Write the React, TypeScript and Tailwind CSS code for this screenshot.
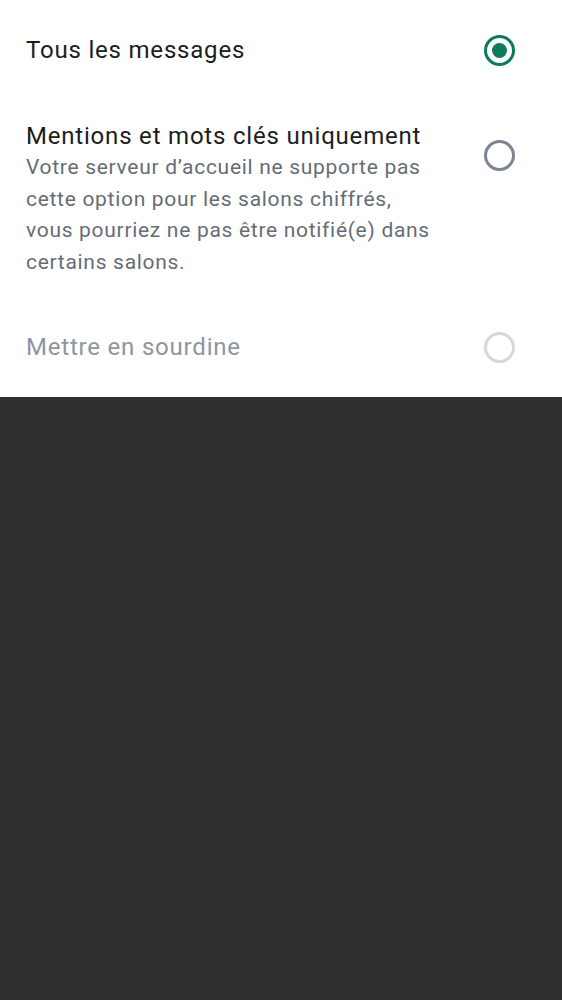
import React from 'react';

type Option = {
  label: string;
  description?: string;
  selected?: boolean;
  disabled?: boolean;
};

const options: Option[] = [
  { label: 'Tous les messages', selected: true },
  {
    label: 'Mentions et mots clés uniquement',
    description:
      'Votre serveur d’accueil ne supporte pas cette option pour les salons chiffrés, vous pourriez ne pas être notifié(e) dans certains salons.',
  },
  { label: 'Mettre en sourdine', disabled: true },
];

const Radio: React.FC<{ selected?: boolean; disabled?: boolean }> = ({ selected, disabled }) => {
  if (selected) {
    return (
      <div className="w-[31px] h-[31px] rounded-full border-[3px] border-[#0a7b5c] flex items-center justify-center shrink-0">
        <div className="w-[15px] h-[15px] rounded-full bg-[#0a7b5c]" />
      </div>
    );
  }
  return (
    <div
      className={
        disabled
          ? 'w-[31px] h-[31px] rounded-full border-[3px] border-[#d4d8de] shrink-0'
          : 'w-[31px] h-[31px] rounded-full border-[3px] border-[#7c8591] shrink-0'
      }
    />
  );
};

export default function App() {
  return (
    <div className="min-h-[1000px] bg-[#303030] font-['Roboto',sans-serif]">
      <div className="bg-white h-[397px] flex flex-col">
        {/* Tous les messages */}
        <div className="flex items-center justify-between pl-[26px] pr-[47px] h-[100px]">
          <div className="text-[24px] leading-[32px] text-[#1b1d22] tracking-[0.8px]">{options[0].label}</div>
          <Radio selected />
        </div>

        {/* Mentions */}
        <div className="flex items-start justify-between pl-[26px] pr-[47px] pt-[20px] h-[197px]">
          <div className="w-[410px]">
            <div className="text-[24px] leading-[32px] text-[#1b1d22] tracking-[0.8px] whitespace-nowrap">
              {options[1].label}
            </div>
            <div className="text-[21px] leading-[31.5px] text-[#656d77] tracking-[0.7px]">
              {options[1].description}
            </div>
          </div>
          <div className="mt-[20px]">
            <Radio />
          </div>
        </div>

        {/* Sourdine */}
        <div className="flex items-center justify-between pl-[26px] pr-[47px] h-[100px]">
          <div className="text-[24px] leading-[32px] text-[#8d95a1] tracking-[0.8px]">{options[2].label}</div>
          <Radio disabled />
        </div>
      </div>
    </div>
  );
}
